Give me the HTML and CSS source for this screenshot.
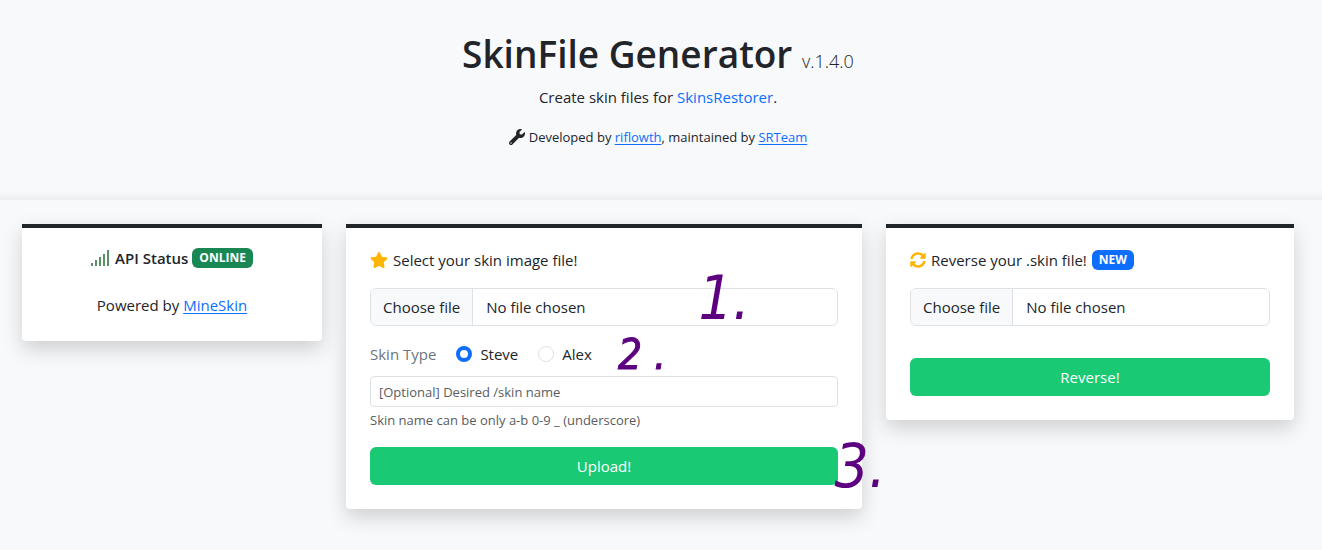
FILE: index.html
```html
<!DOCTYPE html>
<html lang="en">
<head>
<meta charset="utf-8">
<meta name="viewport" content="width=device-width, initial-scale=1">
<title>SkinFile Generator</title>
<link rel="stylesheet" href="styles.css">
</head>
<body>
<header class="hero">
  <h1 class="hero-title">SkinFile Generator <small class="version">v.1.4.0</small></h1>
  <p class="lead">Create skin files for <a class="plain-link" href="#">SkinsRestorer</a>.</p>
  <p class="credits">
    <svg class="icon-wrench" viewBox="0 0 512 512" aria-hidden="true"><path d="M507.73 109.1c-2.24-9.03-13.54-12.09-20.12-5.51l-74.36 74.36-67.88-11.31-11.31-67.88 74.36-74.36c6.62-6.62 3.43-17.9-5.66-20.16-47.38-11.74-99.55.91-136.58 37.93-39.64 39.64-50.55 97.1-34.05 147.2L18.74 402.76c-24.99 24.99-24.99 65.51 0 90.5 24.99 24.99 65.51 24.99 90.5 0l213.21-213.21c50.12 16.71 107.47 5.68 147.37-34.22 37.07-37.07 49.7-89.32 37.91-136.73zM64 472c-13.25 0-24-10.75-24-24 0-13.26 10.75-24 24-24s24 10.74 24 24c0 13.25-10.75 24-24 24z"/></svg>
    <span>Developed by <a href="#">riflowth</a>, maintained by <a href="#">SRTeam</a></span>
  </p>
</header>
<main class="columns">
  <section class="card status">
    <h2 class="status-title">
      <svg class="icon-signal" viewBox="0 0 20 16" aria-hidden="true"><path d="M0 13h2v3H0zM4 10h2v6H4zM8 7h2v9H8zM12 4h2v12h-2zM16 0h2v16h-2z"/></svg>
      <span>API Status</span>
      <span class="badge online">ONLINE</span>
    </h2>
    <p class="powered">Powered by <a href="#">MineSkin</a></p>
  </section>

  <form class="card upload">
    <h2 class="card-title">
      <svg class="icon-star" viewBox="0 0 576 512" aria-hidden="true"><path d="M259.3 17.8L194 150.2 47.9 171.5c-26.2 3.8-36.7 36.1-17.7 54.6l105.7 103-25 145.5c-4.5 26.3 23.2 46 46.4 33.7L288 439.6l130.7 68.7c23.2 12.2 50.9-7.4 46.4-33.7l-25-145.5 105.7-103c19-18.5 8.5-50.8-17.7-54.6L382 150.2 316.7 17.8c-11.7-23.6-45.6-23.9-57.4 0z"/></svg>
      <span>Select your skin image file!</span>
    </h2>
    <label class="file">
      <input class="file-input" type="file" accept="image/png">
      <span class="file-button">Choose file</span>
      <span class="file-name">No file chosen</span>
    </label>
    <div class="skin-type" role="radiogroup" aria-labelledby="type-label">
      <span class="muted" id="type-label">Skin Type</span>
      <label class="option"><input class="radio" type="radio" name="type" checked>Steve</label>
      <label class="option"><input class="radio" type="radio" name="type">Alex</label>
    </div>
    <input class="name" type="text" placeholder="[Optional] Desired /skin name" aria-label="Skin name" aria-describedby="name-help">
    <small class="help" id="name-help">Skin name can be only a-b 0-9 _ (underscore)</small>
    <button class="button" type="button">Upload!</button>
    <span class="mark mark-one">1.</span>
    <span class="mark mark-two">2 .</span>
    <span class="mark mark-three">3.</span>
  </form>

  <form class="card reverse">
    <h2 class="card-title">
      <svg class="icon-sync" viewBox="0 0 512 512" aria-hidden="true"><path d="M370.72 133.28C339.458 104.008 298.888 87.962 255.848 88c-77.458.068-144.328 53.178-162.791 126.85-1.344 5.363-6.122 9.15-11.651 9.15H24.103c-7.498 0-13.194-6.807-11.807-14.176C33.933 94.924 134.813 8 256 8c66.448 0 126.791 26.136 171.315 68.685L463.03 40.97C478.149 25.851 504 36.559 504 57.941V192c0 13.255-10.745 24-24 24H345.941c-21.382 0-32.09-25.851-16.971-40.971l41.75-41.749zM32 296h134.059c21.382 0 32.09 25.851 16.971 40.971l-41.75 41.75c31.262 29.273 71.835 45.319 114.876 45.28 77.418-.07 144.315-53.144 162.787-126.849 1.344-5.363 6.122-9.15 11.651-9.15h57.304c7.498 0 13.194 6.807 11.807 14.176C478.067 417.076 377.187 504 256 504c-66.448 0-126.791-26.136-171.315-68.685L48.97 471.03C33.851 486.149 8 475.441 8 454.059V320c0-13.255 10.745-24 24-24z"/></svg>
      <span>Reverse your .skin file!</span>
      <span class="badge new">NEW</span>
    </h2>
    <label class="file">
      <input class="file-input" type="file" accept=".skin">
      <span class="file-button">Choose file</span>
      <span class="file-name">No file chosen</span>
    </label>
    <button class="button" type="button">Reverse!</button>
  </form>
</main>
</body>
</html>
```
FILE: styles.css
```css
* { box-sizing: border-box; }
body {
  margin: 0;
  background: #f8f9fb;
  color: #212529;
  font: 400 15px/24px "Open Sans", "Noto Sans", sans-serif;
}
h1, h2, p { margin: 0; font-size: inherit; font-weight: 400; }
a { color: #0d6efd; text-underline-offset: 2px; }
svg { flex: none; fill: currentColor; }

.hero {
  display: flex;
  flex-direction: column;
  align-items: center;
  padding: 30px 6px 51px 0;
  box-shadow: inset 0 -12px 12px -12px rgba(0, 0, 0, .1);
}
.hero-title { font-size: 37px; line-height: 48px; font-weight: 600; }
.version { font-size: 18px; font-weight: 300; }
.lead { margin-bottom: 16px; }
.plain-link { text-decoration: none; }
.credits { display: flex; align-items: center; gap: 4px; font-size: 13px; }
.icon-wrench { width: 16px; height: 16px; }

.columns {
  display: grid;
  grid-template-columns: repeat(12, 1fr);
  align-items: start;
  gap: 24px;
  padding: 24px 28px 40px 22px;
}
.card {
  position: relative;
  display: flex;
  flex-direction: column;
  padding: 20px 24px 24px;
  border-top: 4px solid #212529;
  border-radius: 0 0 4px 4px;
  background: #fff;
  box-shadow: 0 8px 20px rgba(0, 0, 0, .17);
}
.status { grid-column: span 3; align-items: center; padding-top: 18px; }
.upload { grid-column: span 5; z-index: 1; }
.reverse { grid-column: span 4; }

.status-title, .card-title { display: flex; align-items: center; gap: 5px; }
.status-title { margin-bottom: 23px; gap: 4px; font-weight: 600; }
.card-title { margin-bottom: 16px; }
.icon-signal { width: 20px; height: 16px; color: #5b8f65; }
.icon-star { width: 18px; height: 16px; color: #ffb400; }
.icon-sync { width: 16px; height: 16px; color: #ffb400; }
.badge {
  padding: 0 7px;
  border-radius: 6px;
  color: #fff;
  font-size: 12px;
  line-height: 20px;
  font-weight: 700;
}
.online { background: #198754; }
.new { background: #0d6efd; }

.file {
  position: relative;
  display: flex;
  height: 38px;
  overflow: hidden;
  border: 1px solid #dee2e6;
  border-radius: 6px;
  line-height: 36px;
}
.file-input { position: absolute; inset: 0; width: 100%; opacity: 0; }
.file-button { padding: 0 12px; border-right: 1px solid #dee2e6; background: #f8f9fa; }
.file-name { padding: 0 13px; }

.skin-type { display: flex; gap: 20px; margin: 16px 0 10px; }
.muted { color: #6c757d; }
.option { display: flex; align-items: center; gap: 8px; }
.radio {
  appearance: none;
  width: 16px;
  height: 16px;
  margin: 0;
  border: 1px solid #dee2e6;
  border-radius: 50%;
  background: #fff;
}
.radio:checked { border: 4px solid #0d6efd; }
.name {
  width: 100%;
  height: 31px;
  padding: 0 8px;
  border: 1px solid #dee2e6;
  border-radius: 4px;
  font: inherit;
  font-size: 13px;
}
.name::placeholder { color: #595c5f; }
.help { margin: 1px 0 15px; color: #595c5f; font-size: 13px; }
.button {
  height: 38px;
  border: 0;
  border-radius: 6px;
  background: #19c973;
  color: #fff;
  font: inherit;
}
.reverse .button { margin-top: 32px; }

.mark {
  position: absolute;
  color: #5c0080;
  font-family: "DejaVu Sans Condensed", "DejaVu Sans", sans-serif;
  font-style: oblique;
  font-size: 60px;
  line-height: 60px;
  pointer-events: none;
}
.mark-one { top: 40px; right: 112px; }
.mark-two { top: 106px; right: 196px; font-size: 42px; line-height: 42px; -webkit-text-stroke: 1px #5c0080; }
.mark-three { top: 208px; right: -24px; }
```
